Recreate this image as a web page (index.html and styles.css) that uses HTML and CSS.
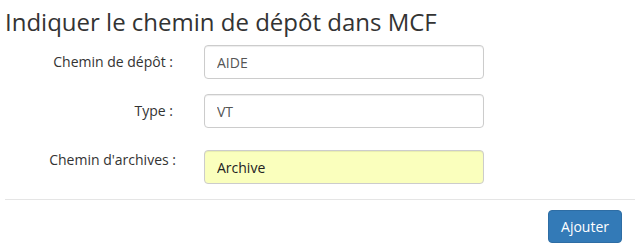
FILE: index.html
```html
<!DOCTYPE html>
<html lang="fr">
<head>
<meta charset="utf-8">
<title>Indiquer le chemin de dépôt dans MCF</title>
<link rel="stylesheet" href="styles.css">
</head>
<body>
<div class="page">
  <h1 class="title">Indiquer le chemin de dépôt dans MCF</h1>
  <form class="form">
    <div class="row">
      <label class="label" for="depot">Chemin de dépôt :</label>
      <input class="input" id="depot" type="text" value="AIDE">
    </div>
    <div class="row">
      <label class="label" for="type">Type :</label>
      <input class="input" id="type" type="text" value="VT">
    </div>
    <div class="row row-top">
      <label class="label label-top" for="archive">Chemin d'archives :</label>
      <input class="input input-autofill" id="archive" type="text" value="Archive">
    </div>
    <hr class="divider">
    <div class="footer">
      <button class="btn" type="button">Ajouter</button>
    </div>
  </form>
</div>
</body>
</html>
```

FILE: styles.css
```css
html, body {
  margin: 0;
  padding: 0;
  background: #fff;
}

body {
  font-family: "Open Sans", "Liberation Sans", sans-serif;
  font-size: 14px;
  color: #333;
}

.page {
  padding: 0 5px;
}

.title {
  margin: 0;
  padding-top: 9px;
  font-size: 24px;
  line-height: 26px;
  font-weight: 400;
  color: #333;
}

.form {
  margin-top: 10px;
}

.row {
  display: grid;
  grid-template-columns: 168px 280px;
  column-gap: 31px;
  align-items: center;
}

.row + .row {
  margin-top: 15px;
}

.row.row-top {
  margin-top: 22px;
  align-items: start;
}

.label {
  text-align: right;
  line-height: 20px;
  font-size: 14px;
  color: #333;
}

.label-top {
  margin-right: -3px;
}

.input {
  box-sizing: border-box;
  height: 34px;
  width: 280px;
  margin: 0;
  padding: 6px 12px;
  font-family: "Open Sans", "Liberation Sans", sans-serif;
  font-size: 14px;
  line-height: 20px;
  color: #555;
  background: #fff;
  border: 1px solid #ccc;
  border-radius: 4px;
  box-shadow: inset 0 1px 1px rgba(0, 0, 0, 0.075);
  outline: none;
}

.input-autofill {
  background: #faffbd;
  color: #222;
}

.divider {
  margin: 15px 0 10px;
  border: 0;
  border-top: 1px solid #e5e5e5;
  height: 0;
}

.footer {
  display: flex;
  justify-content: flex-end;
  padding-right: 13px;
}

.btn {
  box-sizing: border-box;
  height: 33px;
  padding: 0 12px;
  font-family: "Open Sans", "Liberation Sans", sans-serif;
  font-size: 14px;
  line-height: 31px;
  color: #fff;
  background: #337ab7;
  border: 1px solid #2e6da4;
  border-radius: 4px;
  cursor: pointer;
}
```
